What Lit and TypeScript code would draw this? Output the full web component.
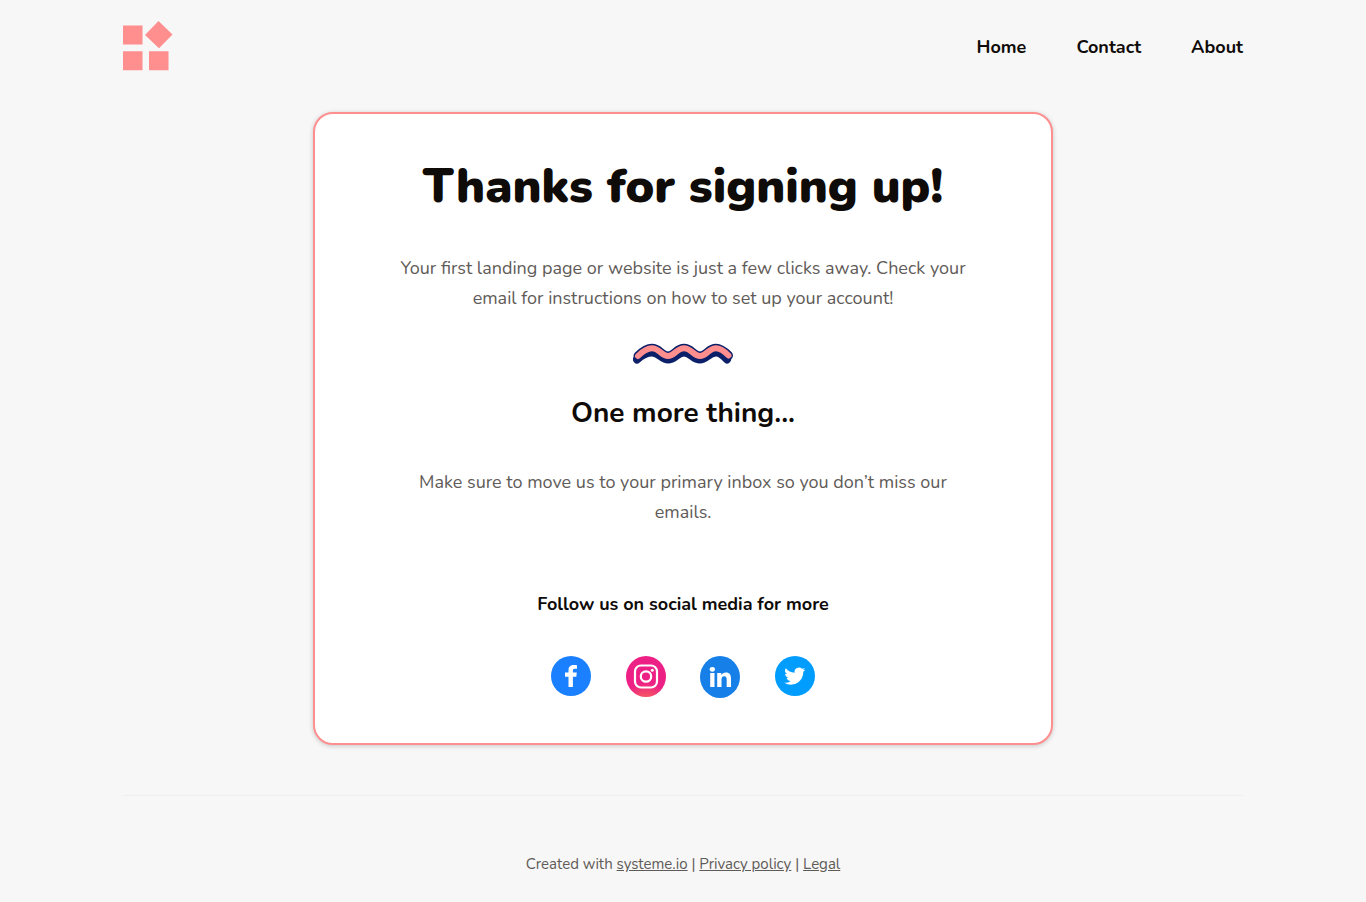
import { LitElement, html, css, svg } from "lit";
import { customElement } from "lit/decorators.js";

const logo = svg`
  <svg class="logo" viewBox="0 0 50 50" aria-hidden="true">
    <path fill="#ff8e8f" d="M0 4.500h19.500v19H0zM0 30.200h19.500v19H0zM26 30.200h19.500v19H26zM35.500 0 49.500 13.500 36 27.300 22 14z" />
  </svg>`;

const wave = svg`
  <svg class="wave" viewBox="0 0 100 22" aria-hidden="true" fill="none" stroke-linecap="round" stroke-linejoin="round">
    <path stroke="#0c2069" stroke-width="8" d="M4 16.500C9 12 13 9.500 19 9.500C26 9.500 29 16.500 35 16.500C42 16.500 44 9.500 51 9.500C58 9.500 60 16.500 67 16.500C73 16.500 76 9.500 83 9.500C88 9.500 91 13 94 16.500" />
    <path stroke="#0c2069" stroke-width="9" d="M5 13C10 8 14 5.300 19 5.300C26 5.300 29 13 35 13C41 13 44 5.300 51 5.300C58 5.300 61 13 67 13C73 13 76 5.300 83 5.300C88 5.300 92 9 95.500 12.500" />
    <path stroke="#ff8e8f" stroke-width="6" d="M5 13C10 8 14 5.300 19 5.300C26 5.300 29 13 35 13C41 13 44 5.300 51 5.300C58 5.300 61 13 67 13C73 13 76 5.300 83 5.300C88 5.300 92 9 95.500 12.500" />
  </svg>`;

const facebook = svg`
  <svg class="icon" viewBox="0 0 40 40" aria-hidden="true">
    <circle cx="20" cy="20" r="20" fill="#1a80ff" />
    <path fill="#fff" d="M17.500 31V20.700H14V16.600h3.500v-2.600C17.500 10.500 19.700 9 22.600 9c1.400 0 2.600.1 3.400.2v3.600h-2c-1.700 0-2.100.8-2.100 2v1.800h3.900l-.5 4.100h-3.400V31z" />
  </svg>`;

const instagram = svg`
  <svg class="icon tall" viewBox="0 0 40 41" aria-hidden="true">
    <defs>
      <radialGradient id="insta" cx="0.5" cy="1.25" r="0.6">
        <stop offset="0.3" stop-color="#f6605a" />
        <stop offset="1" stop-color="#ed2185" />
      </radialGradient>
    </defs>
    <ellipse cx="20" cy="20.500" rx="20" ry="20.500" fill="url(#insta)" />
    <rect x="9" y="9.500" width="22" height="22" rx="6" fill="none" stroke="#fff" stroke-width="2.200" />
    <circle cx="20" cy="20.500" r="5.200" fill="none" stroke="#fff" stroke-width="2.200" />
    <circle cx="26.300" cy="14.300" r="1.500" fill="#fff" />
  </svg>`;

const linkedin = svg`
  <svg class="icon taller" viewBox="0 0 40 42" aria-hidden="true">
    <ellipse cx="20" cy="21" rx="20" ry="21" fill="#1780e8" />
    <rect x="10.200" y="17" width="4.300" height="14" fill="#fff" />
    <ellipse cx="12.300" cy="13.300" rx="2.600" ry="2.400" fill="#fff" />
    <path fill="#fff" d="M17.200 17h4.100v2c.9-1.500 2.500-2.400 4.500-2.400 4.100 0 5.200 2.600 5.200 6.400v8h-4.300v-7.200c0-2-.3-3.600-2.500-3.600s-2.700 1.700-2.700 3.600V31h-4.300z" />
  </svg>`;

const twitter = svg`
  <svg class="icon" viewBox="0 0 40 40" aria-hidden="true">
    <circle cx="20" cy="20" r="20" fill="#009dff" />
    <path fill="#fff" transform="translate(9.300 9.500) scale(.88)" d="M23.950 4.570a10 10 0 0 1-2.820.77 4.960 4.960 0 0 0 2.160-2.720 9.900 9.900 0 0 1-3.120 1.190 4.920 4.920 0 0 0-8.380 4.480C7.690 8.090 4.070 6.130 1.640 3.160a4.920 4.920 0 0 0 1.520 6.570 4.900 4.900 0 0 1-2.230-.61v.06a4.920 4.920 0 0 0 3.950 4.830 5 5 0 0 1-2.210.08 4.940 4.940 0 0 0 4.600 3.420A9.870 9.870 0 0 1 0 19.540a14 14 0 0 0 7.550 2.210c9.050 0 14-7.500 14-13.980 0-.21 0-.42-.02-.63a9.940 9.940 0 0 0 2.460-2.550z" />
  </svg>`;

@customElement("app-root")
export class AppRoot extends LitElement {
  static styles = css`
    :host {
      display: flex;
      flex-direction: column;
      box-sizing: border-box;
      min-height: 100vh;
      padding: 0 20px;
      background: #f7f7f7;
      color: #0f0b09;
      font-family: Nunito, "Open Sans", "Noto Sans", sans-serif;
      font-size: 18px;
      line-height: 30px;
    }
    a {
      color: inherit;
    }
    .header,
    .footer {
      box-sizing: border-box;
      width: 100%;
      max-width: 1120px;
      margin: 0 auto;
    }
    .header {
      display: flex;
      align-items: center;
      justify-content: space-between;
      padding: 21px 0;
    }
    .logo {
      display: block;
      width: 50px;
      height: 50px;
    }
    .nav {
      display: flex;
      gap: 50px;
      padding-top: 2px;
      font-weight: 700;
    }
    .nav a {
      text-decoration: none;
    }
    .card {
      display: flex;
      flex-direction: column;
      align-items: center;
      box-sizing: border-box;
      width: 100%;
      max-width: 740px;
      margin: 20px auto 50px;
      padding: 36px 60px 45px;
      border: 2px solid #ff8e8f;
      border-radius: 20px;
      background: #fff;
      box-shadow: 0 1px 5px rgba(0, 0, 0, 0.2);
      text-align: center;
    }
    .title,
    .subtitle,
    .text,
    .follow {
      margin: 0;
    }
    .title {
      font-size: 48px;
      font-weight: 900;
      line-height: 72px;
    }
    .text {
      max-width: 580px;
      color: #5f5b58;
      font-weight: 400;
    }
    .title + .text {
      margin-top: 31px;
    }
    .wave {
      display: block;
      width: 100px;
      height: 22px;
      margin: 30px 0 26px;
    }
    .subtitle {
      font-size: 28px;
      font-weight: 700;
      line-height: 44px;
    }
    .subtitle + .text {
      margin-top: 32px;
    }
    .follow {
      margin-top: 62px;
      font-size: 18px;
      font-weight: 700;
    }
    .social {
      display: flex;
      justify-content: space-between;
      width: 100%;
      max-width: 264px;
      margin-top: 37px;
    }
    .social a,
    .icon {
      display: block;
    }
    .icon {
      width: 40px;
      height: 40px;
    }
    .tall {
      height: 41px;
    }
    .taller {
      height: 42px;
    }
    .footer {
      padding: 53px 0 23px;
      border-top: 1px solid #efefef;
      color: #5f5b58;
      font-size: 15px;
      font-weight: 400;
      text-align: center;
    }
  `;

  render() {
    return html`
      <header class="header">
        ${logo}
        <nav class="nav">
          <a href="#home">Home</a>
          <a href="#contact">Contact</a>
          <a href="#about">About</a>
        </nav>
      </header>
      <main class="card">
        <h1 class="title">Thanks for signing up!</h1>
        <p class="text">
          Your first landing page or website is just a few clicks away. Check your email for
          instructions on how to set up your account!
        </p>
        ${wave}
        <h2 class="subtitle">One more thing...</h2>
        <p class="text">Make sure to move us to your primary inbox so you don’t miss our emails.</p>
        <h3 class="follow">Follow us on social media for more</h3>
        <div class="social">
          <a href="#facebook" aria-label="Facebook">${facebook}</a>
          <a href="#instagram" aria-label="Instagram">${instagram}</a>
          <a href="#linkedin" aria-label="LinkedIn">${linkedin}</a>
          <a href="#twitter" aria-label="Twitter">${twitter}</a>
        </div>
      </main>
      <footer class="footer">
        Created with <a href="#systeme">systeme.io</a> | <a href="#privacy">Privacy policy</a> |
        <a href="#legal">Legal</a>
      </footer>
    `;
  }
}
